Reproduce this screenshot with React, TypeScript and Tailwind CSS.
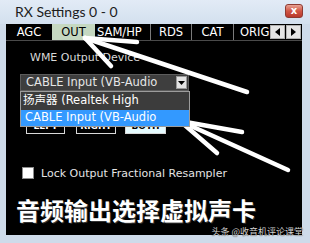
import React from "react";

function Tab({ label, className }: { label: string; className: string }) {
  return <div className={className}>{label}</div>;
}

export default function App() {
  return (
    <div className="relative w-[310px] h-[243px] overflow-hidden bg-[#cedbea] font-['DejaVu_Sans','Noto_Sans_CJK_SC',sans-serif]">
      {/* title bar */}
      <div className="flex h-[24px] items-center justify-between bg-gradient-to-b from-[#e2ebf6] to-[#d3e0ee] pl-[15px] pr-[7px]">
        <span className="font-['Lato',sans-serif] text-[14px] leading-none text-[#1c1c1c]">RX Settings 0 - 0</span>
        <div className="-mt-[3px] flex h-[14px] w-[18px] items-center justify-center rounded-[3px] border border-[#8e3b32] bg-gradient-to-b from-[#e8a294] via-[#d05645] to-[#b9392c] text-[10px] font-bold leading-none text-white">
          x
        </div>
      </div>

      {/* black client panel */}
      <div className="ml-[6px] mr-[8px] flex h-[211px] flex-col bg-black">
        {/* tab strip */}
        <div className="flex h-[17px] items-stretch border-b border-[#4a4a4a] text-[11.5px] leading-none text-white">
          <Tab label="AGC" className="flex w-[46px] items-center justify-center pt-[2px]" />
          <Tab label="OUT" className="flex w-[43px] items-center justify-center bg-[#c5d8c1] pt-[2px] text-black" />
          <Tab label="SAM/HP" className="flex w-[56px] items-center border-r border-[#7a7a7a] pl-[2px] pt-[2px]" />
          <Tab label="RDS" className="flex w-[41px] items-center justify-center border-r border-[#7a7a7a] pt-[2px]" />
          <Tab label="CAT" className="flex w-[42px] items-center justify-center border-r border-[#7a7a7a] pt-[2px]" />
          <div className="flex w-[36px] items-center overflow-hidden whitespace-nowrap pl-[6px] pt-[2px]">ORIGINAL</div>
          <div className="flex items-center gap-[1px]">
            <div className="flex h-[14px] w-[15px] items-center justify-center border border-[#b0b0b0] bg-[#e4e4e4]">
              <svg width="5" height="8" viewBox="0 0 5 8"><path d="M5 0 L0 4 L5 8 Z" fill="#000" /></svg>
            </div>
            <div className="flex h-[14px] w-[15px] items-center justify-center border border-[#b0b0b0] bg-[#e4e4e4]">
              <svg width="5" height="8" viewBox="0 0 5 8"><path d="M0 0 L5 4 L0 8 Z" fill="#000" /></svg>
            </div>
          </div>
        </div>

        {/* tab content */}
        <div className="flex flex-col">
          <div className="ml-[24px] mt-[11px] text-[11px] leading-none text-[#d8d8d8]">WME Output Device</div>

          <div className="relative ml-[14px] mt-[11px] w-[169px]">
            <div className="flex h-[17px] items-center justify-between border border-[#5c5c5c] bg-[#3e3e3e] pl-[5px] pr-[1px]">
              <span className="whitespace-nowrap text-[11.5px] leading-none text-[#e6e6e6]">CABLE Input (VB-Audio</span>
              <div className="flex h-[13px] w-[11px] items-center justify-center border border-[#9a9a9a] bg-[#e2e2e2]">
                <svg width="7" height="4" viewBox="0 0 7 4"><path d="M0 0 L7 0 L3.5 4 Z" fill="#000" /></svg>
              </div>
            </div>
            {/* open drop-down list */}
            <div className="absolute left-0 top-full z-10 w-[170px] border border-[#9c9c9c] bg-[#3c3c3c]">
              <div className="flex h-[18px] items-center pl-[2px] text-[11.5px] leading-none text-white whitespace-nowrap">扬声器 (Realtek High</div>
              <div className="flex h-[16px] items-center bg-[#3399ff] pl-[4px] text-[11.5px] leading-none text-white whitespace-nowrap">CABLE Input (VB-Audio</div>
            </div>
          </div>

          <div className="ml-[20px] mt-[28px] flex h-[15px] text-[9px] font-bold leading-none">
            <div className="flex w-[39px] items-center justify-center border border-[#d8d8d8] text-white">LEFT</div>
            <div className="ml-[11px] flex w-[40px] items-center justify-center border border-[#d8d8d8] text-white">RIGHT</div>
            <div className="ml-[9px] flex w-[41px] items-center justify-center border border-[#d8d8d8] bg-[#e6fbff] text-black">BOTH</div>
          </div>

          <div className="ml-[16px] mt-[33px] flex items-center">
            <div className="h-[12px] w-[12px] border border-[#8c8c8c] bg-white" />
            <span className="ml-[7px] text-[11px] leading-none text-[#e4e4e4]">Lock Output Fractional Resampler</span>
          </div>

          <div className="ml-[10px] mt-[19px] font-['Noto_Sans_CJK_SC',sans-serif] text-[24px] font-bold leading-none text-white [text-shadow:1px_1px_0_#333]">
            音频输出选择虚拟声卡
          </div>
        </div>
      </div>

      {/* watermark */}
      <div className="absolute right-[7px] top-[227px] font-['Noto_Sans_CJK_SC',sans-serif] text-[9px] leading-none text-[#d0d0d0] [text-shadow:0_0_1px_#000]">
        头条 @收音机评论课堂
      </div>

      {/* hand-drawn annotation arrows */}
      <svg className="pointer-events-none absolute inset-0" width="310" height="243" viewBox="0 0 310 243">
        <g stroke="#fff" strokeWidth="4.5" strokeLinecap="round" fill="none">
          <path d="M85 38 L247 92" />
          <path d="M85 38 L137 42" />
          <path d="M85 38 L111 66" />
          <path d="M180 121 L288 170" />
          <path d="M180 121 L242 132" />
          <path d="M180 121 L217 153" />
        </g>
      </svg>
    </div>
  );
}
